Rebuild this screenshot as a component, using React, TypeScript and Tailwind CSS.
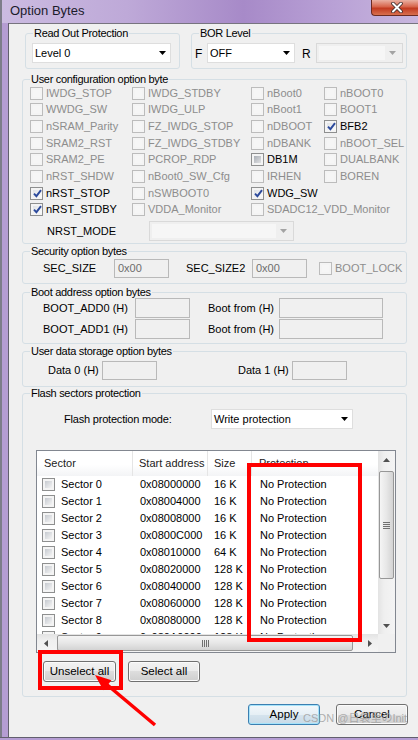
import React from 'react';

type Box = 'off' | 'on' | 'dis' | 'mixed';

function Tick() {
  return (
    <svg width="9" height="9" viewBox="0 0 9 9" className="shrink-0 overflow-visible">
      <path d="M1 4.6 L3.4 7.2 L8 1.2" fill="none" stroke="#2c4a9c" strokeWidth="1.9" />
    </svg>
  );
}

function CheckBox({ state = 'off' }: { state?: Box }) {
  if (state === 'dis') {
    return (
      <span className="flex h-[13px] w-[13px] shrink-0 border border-[#bcbcbc] bg-[#f4f4f4] p-[2px]">
        <span className="flex-1 bg-[#f6f6f6]" />
      </span>
    );
  }
  const inner =
    state === 'mixed'
      ? 'bg-[linear-gradient(135deg,#a9aeb5,#e0e1e3)]'
      : state === 'on'
        ? 'bg-[linear-gradient(135deg,#dfe2e6,#fcfcfc)]'
        : 'bg-[linear-gradient(135deg,#c6cad0,#f4f4f4)]';
  return (
    <span className="flex h-[13px] w-[13px] shrink-0 border border-[#8e8f8f] bg-[#f4f4f4] p-[2px]">
      <span className={`flex flex-1 items-center justify-center ${inner}`}>
        {state === 'on' && <Tick />}
      </span>
    </span>
  );
}

function Opt({ label, state }: { label: string; state: Box }) {
  return (
    <div className="flex items-center gap-[3px] whitespace-nowrap">
      <CheckBox state={state} />
      <span className={state === 'dis' ? 'text-[#8d8d8d]' : 'text-black'}>{label}</span>
    </div>
  );
}

function DownArrow({ color = '#000' }: { color?: string }) {
  return (
    <svg width="7" height="4" viewBox="0 0 7 4">
      <path d="M0 0H7L3.5 4Z" fill={color} />
    </svg>
  );
}

function Select({ value, className = '', disabled }: { value?: string; className?: string; disabled?: boolean }) {
  if (disabled) {
    return (
      <div className={`flex h-[20px] shrink-0 items-center border border-[#d9d9d9] bg-[#efefef] p-[2px] ${className}`}>
        <div className="h-full flex-1 bg-[#f6f6f6]" />
        <div className="flex w-[15px] justify-center">
          <DownArrow color="#a3a3a3" />
        </div>
      </div>
    );
  }
  return (
    <div className={`flex h-[20px] shrink-0 items-center border border-[#dedede] bg-white pl-[2px] ${className}`}>
      <span className="flex-1 whitespace-nowrap">{value}</span>
      <div className="flex w-[15px] justify-center">
        <DownArrow />
      </div>
    </div>
  );
}

function Field({ value, className = '' }: { value?: string; className?: string }) {
  return (
    <div className={`flex shrink-0 items-center border border-[#b9b9b9] bg-[#f0f0f0] pl-[3px] text-[#6d6d6d] ${className}`}>
      {value}
    </div>
  );
}

function Group({ title, className = '', children }: { title: string; className?: string; children?: React.ReactNode }) {
  return (
    <fieldset className={`rounded-[3px] border border-[#d5dfe5] ${className}`}>
      <legend className="ml-[7px] px-[1px] text-[11px] leading-[12px] tracking-[-0.3px] whitespace-nowrap">{title}</legend>
      {children}
    </fieldset>
  );
}

function Btn({ label, className = '', primary }: { label: string; className?: string; primary?: boolean }) {
  const look = primary
    ? 'border-[#3c7fb1] shadow-[inset_0_0_0_1px_#a6e3fa] bg-[linear-gradient(#f3f8fb,#e6eff5_50%,#d6e4ee_50%,#c8dae7)]'
    : 'border-[#707070] shadow-[inset_0_0_0_1px_#fbfbfb] bg-[linear-gradient(#f2f2f2,#ebebeb_50%,#dddddd_50%,#cfcfcf)]';
  return (
    <div className={`flex h-[21px] shrink-0 items-center justify-center rounded-[3px] border text-[11.5px] ${look} ${className}`}>
      {label}
    </div>
  );
}

function Tri({ dir }: { dir: 'up' | 'down' | 'left' | 'right' }) {
  const paths = { up: 'M0 4H7L3.5 0Z', down: 'M0 0H7L3.5 4Z', left: 'M4 0V7L0 3.5Z', right: 'M0 0V7L4 3.5Z' };
  const vert = dir === 'up' || dir === 'down';
  return (
    <svg width={vert ? 7 : 4} height={vert ? 4 : 7} viewBox={vert ? '0 0 7 4' : '0 0 4 7'}>
      <path d={paths[dir]} fill="#505050" />
    </svg>
  );
}

const cfg: ([string, Box] | null)[][] = [
  [['IWDG_STOP', 'dis'], ['IWDG_STDBY', 'dis'], ['nBoot0', 'dis'], ['nBOOT0', 'dis']],
  [['WWDG_SW', 'dis'], ['IWDG_ULP', 'dis'], ['nBoot1', 'dis'], ['BOOT1', 'dis']],
  [['nSRAM_Parity', 'dis'], ['FZ_IWDG_STOP', 'dis'], ['nDBOOT', 'dis'], ['BFB2', 'on']],
  [['SRAM2_RST', 'dis'], ['FZ_IWDG_STDBY', 'dis'], ['nDBANK', 'dis'], ['nBOOT_SEL', 'dis']],
  [['SRAM2_PE', 'dis'], ['PCROP_RDP', 'dis'], ['DB1M', 'mixed'], ['DUALBANK', 'dis']],
  [['nRST_SHDW', 'dis'], ['nBoot0_SW_Cfg', 'dis'], ['IRHEN', 'dis'], ['BOREN', 'dis']],
  [['nRST_STOP', 'on'], ['nSWBOOT0', 'dis'], ['WDG_SW', 'on'], null],
  [['nRST_STDBY', 'on'], ['VDDA_Monitor', 'dis'], ['SDADC12_VDD_Monitor', 'dis'], null],
];

const sectors = [
  ['0x08000000', '16 K'],
  ['0x08004000', '16 K'],
  ['0x08008000', '16 K'],
  ['0x0800C000', '16 K'],
  ['0x08010000', '64 K'],
  ['0x08020000', '128 K'],
  ['0x08040000', '128 K'],
  ['0x08060000', '128 K'],
  ['0x08080000', '128 K'],
  ['0x080A0000', '128 K'],
];

export default function App() {
  return (
    <div className="relative h-[740px] w-[418px] overflow-hidden bg-[#b59dd3] font-['Liberation_Sans',Arial,sans-serif] text-[11px] leading-[13px] text-black">
      {/* title bar */}
      <div className="flex h-[23px] items-start border-l-[2px] border-[#7d7d8a] bg-[linear-gradient(90deg,#cbbbe1,#bea9d8_30%,#a78ac8_58%,#b9a1d6_80%,#c8b6de)]">
        <span className="ml-[8px] mt-[3px] text-[13px] leading-[15px] text-[#1b1b2b]">Option Bytes</span>
        <div className="ml-auto flex h-[16px] w-[47px] items-center justify-center rounded-bl-[4px] border border-t-0 border-r-0 border-[#6b2b22] bg-[linear-gradient(#eab0a2,#d7644a_45%,#c23a20_55%,#d8704f)] pl-[3px]">
          <svg width="14" height="11" viewBox="0 0 14 11">
            <path d="M3 1.5L11 9.5M11 1.5L3 9.5" stroke="#3a2a2a" strokeWidth="3.6" strokeLinecap="round" />
            <path d="M3 1.5L11 9.5M11 1.5L3 9.5" stroke="#ffffff" strokeWidth="2" strokeLinecap="round" />
          </svg>
        </div>
      </div>

      <div className="flex h-[714px]">
        <div className="w-[9px] shrink-0 border-l-[2px] border-r border-l-[#7d7d8a] border-r-[#625f6e] bg-[#b59dd3]" />
        <div className="flex-1 border-t border-[#77747f] bg-[#f0f0f0] pl-[13px]">
          {/* read out / BOR */}
          <div className="ml-[3px] mt-[3px] flex gap-[11px]">
            <Group title="Read Out Protection" className="h-[42px] w-[155px]">
              <div className="ml-[6px] mt-[4px] flex">
                <Select value="Level 0" className="w-[139px]" />
              </div>
            </Group>
            <Group title="BOR Level" className="h-[42px] w-[216px]">
              <div className="ml-[3px] mt-[4px] flex items-center">
                <span className="w-[12px] pt-[2px] text-[12px]">F</span>
                <Select value="OFF" className="w-[88px]" />
                <span className="ml-[7px] w-[14px] pt-[2px] text-[12px]">R</span>
                <Select disabled className="w-[87px]" />
              </div>
            </Group>
          </div>

          {/* user configuration */}
          <Group title="User configuration option byte" className="mt-[4px] h-[171px] w-[385px]">
            <div className="ml-[7px] grid auto-rows-[16.67px] grid-cols-[102px_119px_73px_1fr] items-center">
              {cfg.map((row, r) =>
                row.map((c, i) =>
                  c ? <Opt key={`${r}-${i}`} label={c[0]} state={c[1]} /> : <div key={`${r}-${i}`} />
                )
              )}
            </div>
            <div className="ml-[24px] mt-[3px] flex h-[20px] items-center">
              <span className="w-[102px]">NRST_MODE</span>
              <Select disabled className="w-[145px]" />
            </div>
          </Group>

          {/* security */}
          <Group title="Security option bytes" className="mt-[1px] h-[39px] w-[385px]">
            <div className="ml-[20px] mt-[2px] flex h-[19px] items-center whitespace-nowrap">
              <span className="w-[71px]">SEC_SIZE</span>
              <Field value="0x00" className="h-[19px] w-[55px]" />
              <span className="ml-[17px] w-[66px]">SEC_SIZE2</span>
              <Field value="0x00" className="h-[19px] w-[55px]" />
              <span className="ml-[12px]">
                <CheckBox state="dis" />
              </span>
              <span className="ml-[3px] text-[#8d8d8d]">BOOT_LOCK</span>
            </div>
          </Group>

          {/* boot address */}
          <Group title="Boot address option bytes" className="mt-[2px] h-[58px] w-[385px]">
            {['BOOT_ADD0 (H)', 'BOOT_ADD1 (H)'].map((l, i) => (
              <div key={l} className={`ml-[20px] flex h-[20px] items-center whitespace-nowrap ${i ? 'mt-[1px]' : ''}`}>
                <span className="w-[92px]">{l}</span>
                <Field className="h-[20px] w-[55px]" />
                <span className="ml-[18px] w-[71px]">Boot from (H)</span>
                <Field className="h-[20px] w-[104px]" />
              </div>
            ))}
          </Group>

          {/* user data */}
          <Group title="User data storage option bytes" className="mt-[1px] h-[42px] w-[385px]">
            <div className="ml-[25px] mt-[4px] flex h-[19px] items-center whitespace-nowrap">
              <span className="w-[54px]">Data 0 (H)</span>
              <Field className="h-[19px] w-[55px]" />
              <span className="ml-[81px] w-[54px]">Data 1 (H)</span>
              <Field className="h-[19px] w-[55px]" />
            </div>
          </Group>

          {/* flash sectors */}
          <Group title="Flash sectors protection" className="h-[310px] w-[385px]">
            <div className="ml-[41px] mt-[10px] flex h-[20px] items-center">
              <span className="w-[147px] tracking-[-0.2px]">Flash protection mode:</span>
              <Select value="Write protection" className="w-[142px]" />
            </div>

            <div className="ml-[13px] mt-[21px] flex h-[203px] w-[360px] flex-col border border-[#828790] bg-white">
              <div className="flex h-[183px]">
                <div className="flex min-w-0 flex-1 flex-col">
                  <div className="flex h-[25px] shrink-0 items-center bg-[linear-gradient(#ffffff,#ffffff_55%,#f3f4f6)] text-[#222]">
                    <span className="flex h-full w-[96px] items-center border-r border-[#e5e5e5] pl-[7px]">Sector</span>
                    <span className="flex h-full w-[75px] items-center border-r border-[#e5e5e5] pl-[6px]">Start address</span>
                    <span className="flex h-full w-[44px] items-center border-r border-[#e5e5e5] pl-[6px]">Size</span>
                    <span className="flex h-full flex-1 items-center pl-[7px]">Protection</span>
                  </div>
                  <div className="flex-1 overflow-hidden">
                    {sectors.map(([addr, size], i) => (
                      <div key={addr} className="flex h-[17px] items-center whitespace-nowrap">
                        <div className="flex w-[96px] items-center gap-[6px] pl-[5px]">
                          <CheckBox />
                          <span>Sector {i}</span>
                        </div>
                        <span className="w-[75px] pl-[7px]">{addr}</span>
                        <span className="w-[44px] pl-[6px]">{size}</span>
                        <span className="pl-[8px]">No Protection</span>
                      </div>
                    ))}
                  </div>
                </div>
                {/* vertical scrollbar */}
                <div className="flex w-[17px] shrink-0 flex-col bg-[linear-gradient(90deg,#e3e3e3,#efefef_35%,#f4f4f4)]">
                  <div className="flex h-[17px] items-center justify-center">
                    <Tri dir="up" />
                  </div>
                  <div className="flex-1 pt-[3px]">
                    <div className="mx-[1px] flex h-[108px] flex-col items-center justify-center gap-[1px] rounded-[2px] border border-[#979797] bg-[linear-gradient(90deg,#f5f5f5,#e7e7e7_50%,#d3d3d3)]">
                      {[0, 1, 2, 3].map((k) => (
                        <span key={k} className="h-[1px] w-[7px] bg-[#707070]" />
                      ))}
                    </div>
                  </div>
                  <div className="flex h-[17px] items-center justify-center">
                    <Tri dir="down" />
                  </div>
                </div>
              </div>
              {/* horizontal scrollbar */}
              <div className="flex h-[18px]">
                <div className="flex flex-1 items-center bg-[linear-gradient(#e3e3e3,#efefef_35%,#f4f4f4)]">
                  <div className="flex w-[17px] justify-center">
                    <Tri dir="left" />
                  </div>
                  <div className="flex-1">
                    <div className="ml-[3px] flex h-[16px] w-[296px] items-center justify-center gap-[1px] rounded-[2px] border border-[#979797] bg-[linear-gradient(#f5f5f5,#e7e7e7_50%,#d3d3d3)]">
                      {[0, 1, 2, 3].map((k) => (
                        <span key={k} className="h-[7px] w-[1px] bg-[#707070]" />
                      ))}
                    </div>
                  </div>
                  <div className="flex w-[17px] justify-center">
                    <Tri dir="right" />
                  </div>
                </div>
                <div className="w-[17px] bg-[#f0f0f0]" />
              </div>
            </div>

            <div className="ml-[20px] mt-[8px] flex gap-[12px]">
              <Btn label="Unselect all" className="w-[73px]" />
              <Btn label="Select all" className="w-[72px]" />
            </div>
          </Group>

          <div className="mt-[7px] flex gap-[16px] pl-[226px]">
            <Btn label="Apply" primary className="w-[72px]" />
            <Btn label="Cancel" className="w-[72px]" />
          </div>
        </div>
      </div>
      <div className="h-[3px] border-t border-[#625f6e] bg-[#b59dd3]" />

      {/* annotations */}
      <div className="pointer-events-none absolute left-[247px] top-[463px] h-[179px] w-[115px] border-[4px] border-[#ff0000]" />
      <div className="pointer-events-none absolute left-[38px] top-[650px] h-[40px] w-[85px] border-[4px] border-[#ff0000]" />
      <svg className="pointer-events-none absolute left-0 top-0" width="418" height="740" viewBox="0 0 418 740">
        <line x1="155" y1="725" x2="105" y2="683" stroke="#ff0000" strokeWidth="3.5" />
        <path d="M95 675 L111.5 680.2 L103.4 690.2 Z" fill="#ff0000" />
      </svg>
      <span className="pointer-events-none absolute left-[303px] top-[712px] whitespace-nowrap font-['Liberation_Sans','Noto_Sans_CJK_SC',sans-serif] text-[11px] text-[#9c9c9c]/80">
        CSDN @日袋里のInit
      </span>
    </div>
  );
}
